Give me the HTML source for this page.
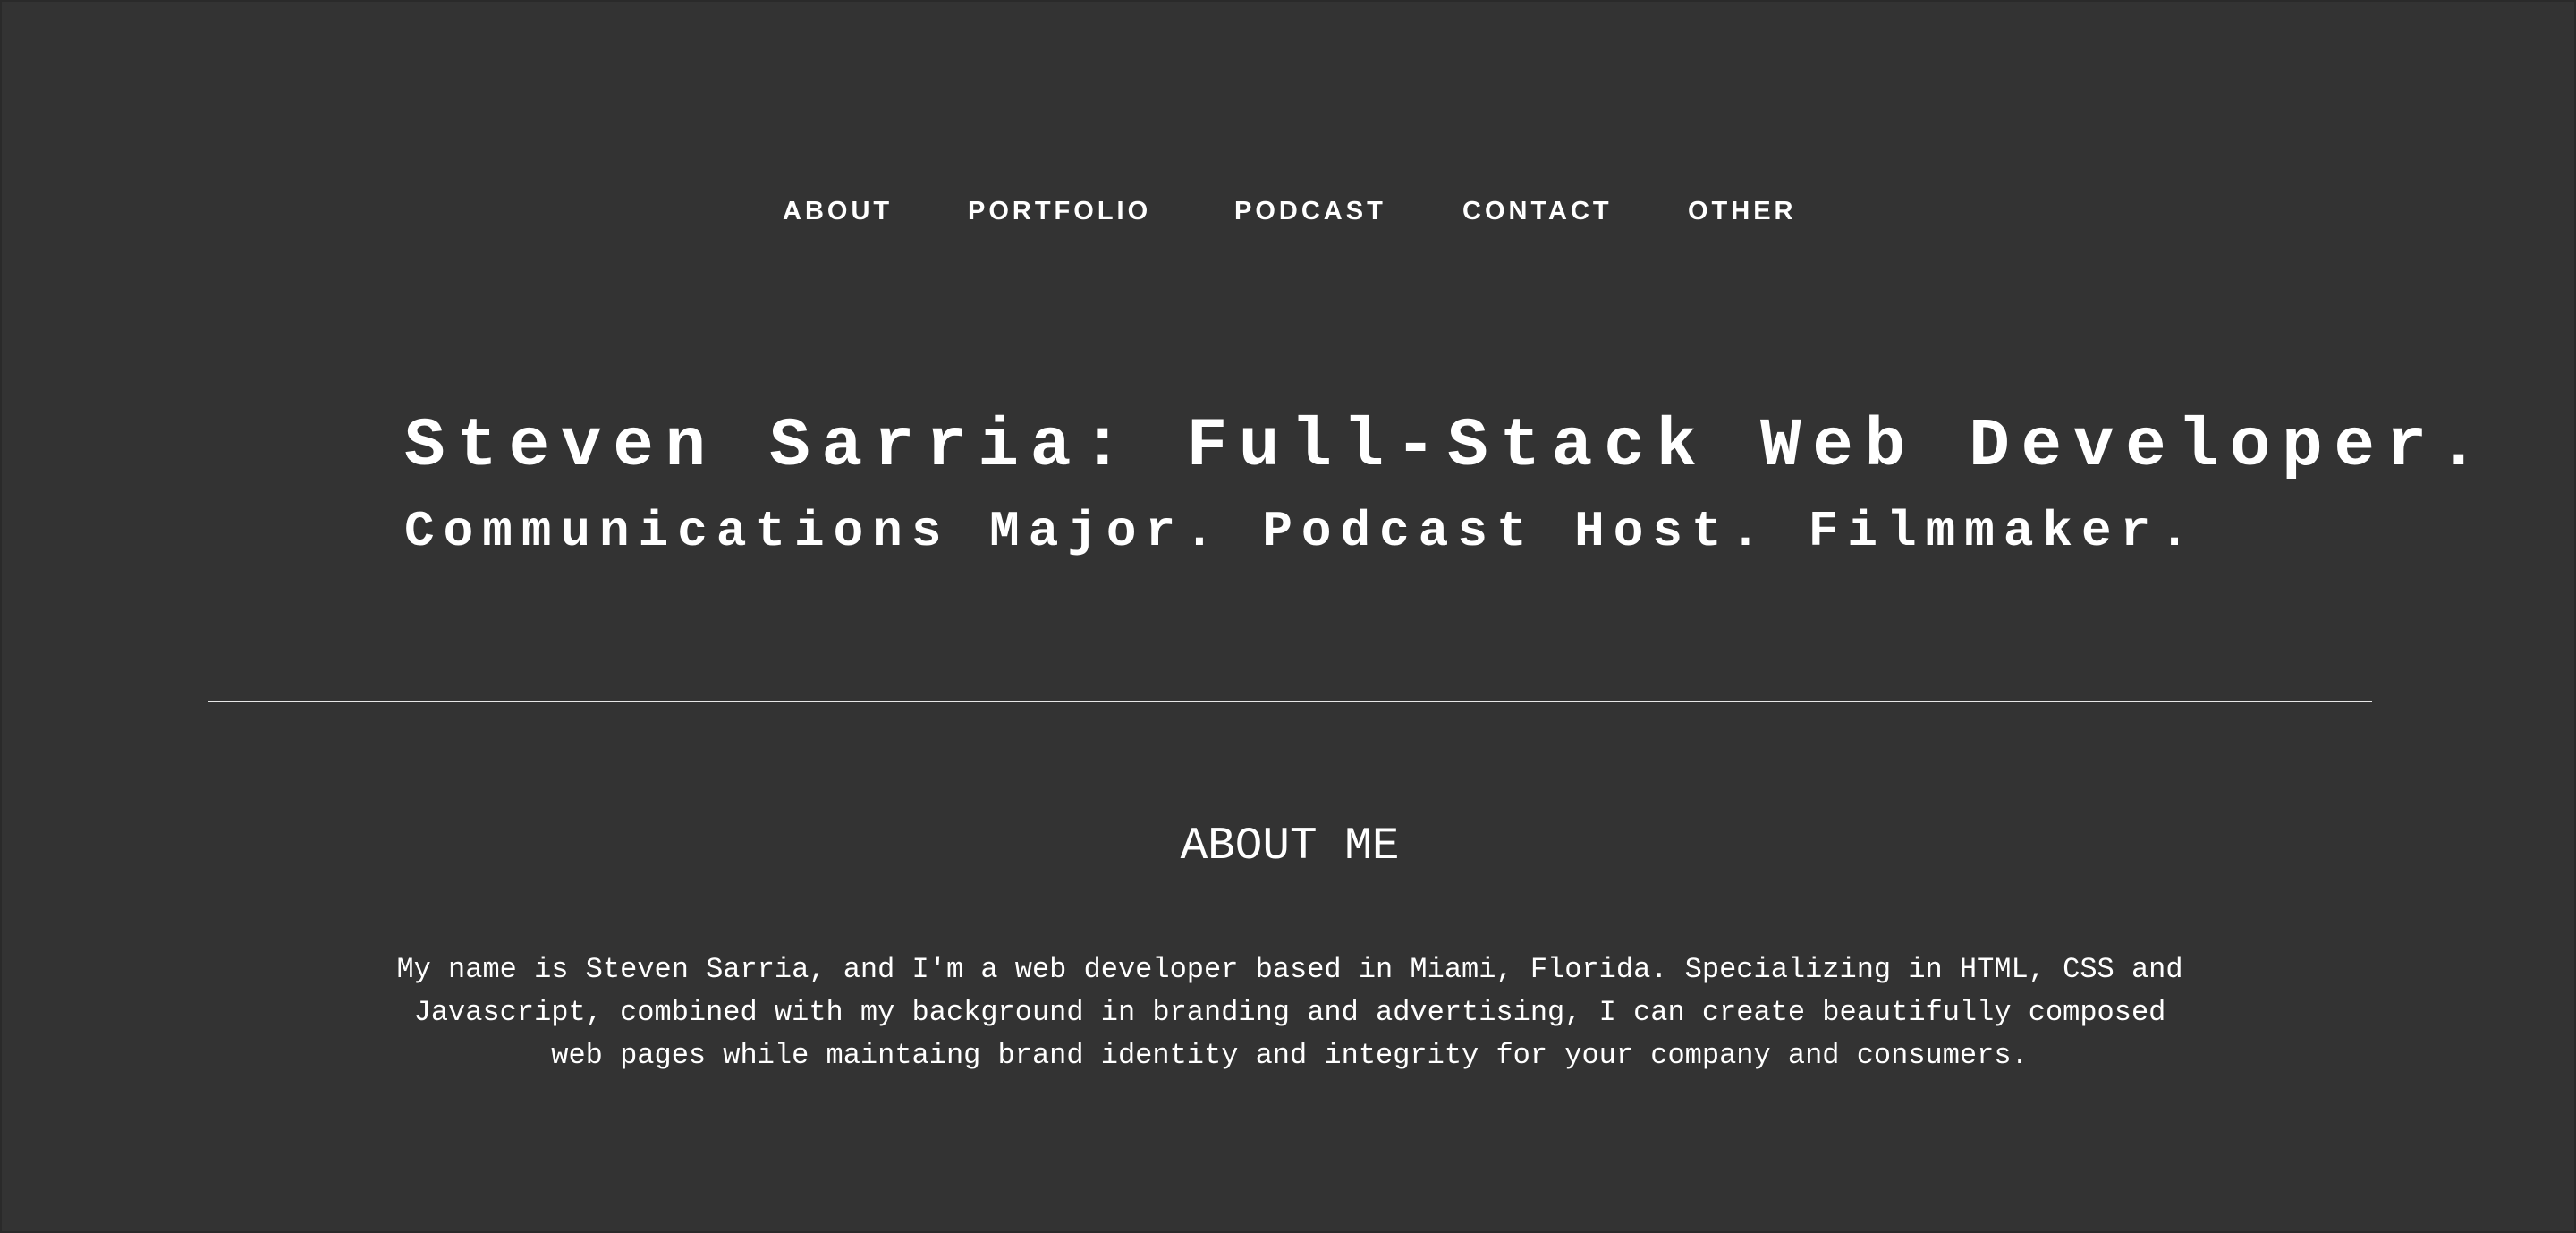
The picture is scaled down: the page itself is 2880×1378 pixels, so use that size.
<!DOCTYPE html>
<html><head><meta charset="utf-8"><style>
html,body{margin:0;padding:0}
body{width:2880px;height:1378px;background:#333333;position:relative;overflow:hidden;color:#fff;box-sizing:border-box;border:2px solid #2a2a2a}
.n{position:absolute;top:219px;font:bold 29px/30px "Liberation Sans",sans-serif;letter-spacing:4px;white-space:nowrap}
.m{position:absolute;font-family:"Liberation Mono",monospace;white-space:nowrap;line-height:1}
#t{left:450px;top:459px;font-size:76px;font-weight:bold;letter-spacing:12.7px}
#s{left:450px;top:564px;font-size:56px;font-weight:bold;letter-spacing:10px}
hr{position:absolute;left:230px;top:781px;width:2420px;margin:0;border:0;height:2px;background:#e8e8e8}
#h{left:0;width:2880px;text-align:center;top:919px;font-size:51px}
#p{position:absolute;left:430px;width:2020px;top:1058px;text-align:center;font:32px/48px "Liberation Mono",monospace}
</style></head><body>
<div class="n" style="left:873px">ABOUT</div>
<div class="n" style="left:1080px">PORTFOLIO</div>
<div class="n" style="left:1378px">PODCAST</div>
<div class="n" style="left:1633px">CONTACT</div>
<div class="n" style="left:1885px">OTHER</div>
<div class="m" id="t">Steven Sarria: Full-Stack Web Developer.</div>
<div class="m" id="s">Communications Major. Podcast Host. Filmmaker.</div>
<hr>
<div class="m" id="h">ABOUT ME</div>
<div id="p">My name is Steven Sarria, and I'm a web developer based in Miami, Florida. Specializing in HTML, CSS and Javascript, combined with my background in branding and advertising, I can create beautifully composed web pages while maintaing brand identity and integrity for your company and consumers.</div>
</body></html>
